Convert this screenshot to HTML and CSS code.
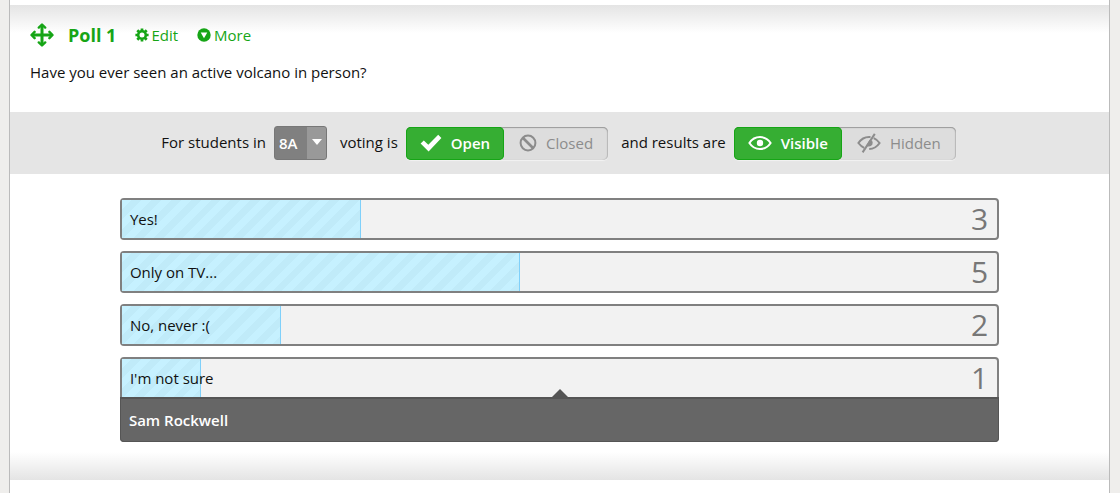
FILE: index.html
```html
<!DOCTYPE html>
<html lang="en">
<head>
<meta charset="utf-8">
<meta name="viewport" content="width=device-width, initial-scale=1">
<title>Poll 1</title>
<link rel="stylesheet" href="styles.css">
</head>
<body>
<main class="sheet">
  <section class="poll">
    <header class="poll-head">
      <div class="title-row">
        <button class="move" type="button" aria-label="Move poll">
          <svg width="24" height="24" viewBox="0 0 24 24" fill="none" stroke="currentColor" stroke-linecap="round" stroke-linejoin="round"><path stroke-width="3" stroke-linecap="butt" d="M12 3v18M3 12h18"/><path stroke-width="2.4" d="M8.8 4.6 12 1.5l3.2 3.1M8.8 19.4l3.2 3.1 3.2-3.1M4.6 8.8 1.5 12l3.1 3.2M19.4 8.8l3.1 3.2-3.1 3.2"/></svg>
        </button>
        <h1 class="title">Poll 1</h1>
        <button class="action action-edit" type="button">
          <svg width="14" height="14" viewBox="0 0 14 14" fill="none" stroke="currentColor"><circle cx="7" cy="7" r="3.8" stroke-width="2.6"/><path stroke-width="2.7" d="M7 .4v2.4M7 11.2v2.4M.4 7h2.4M11.2 7h2.4M2.3 2.3 4 4M10 10l1.7 1.7M11.7 2.3 10 4M4 10l-1.7 1.7"/></svg>
          Edit
        </button>
        <button class="action action-more" type="button">
          <svg width="14" height="14" viewBox="0 0 14 14"><circle cx="7" cy="7" r="6.7" fill="currentColor"/><path fill="#fff" d="M3.7 4.5h6.6L7 10.2z"/></svg>
          More
        </button>
      </div>
      <p class="question">Have you ever seen an active volcano in person?</p>
    </header>

    <form class="controls">
      <label class="phrase" for="group">For students in</label>
      <span class="picker">
        <select class="picker-select" id="group"><option>8A</option></select>
        <span class="picker-arrow"></span>
      </span>
      <span class="phrase phrase-next">voting is</span>
      <span class="toggle" role="radiogroup" aria-label="Voting">
        <label class="choice"><input class="choice-input" type="radio" name="voting" checked>
          <svg width="22" height="18" viewBox="0 0 22 18"><path fill="currentColor" d="m.6 9.600 3.200-3.200 4.500 4.300L18.200.8l3.200 3.100L8.600 17.500z"/></svg>
          Open</label>
        <label class="choice"><input class="choice-input" type="radio" name="voting">
          <svg width="18" height="18" viewBox="0 0 18 18" fill="none" stroke="currentColor" stroke-width="2"><circle cx="9" cy="9" r="7.4"/><path stroke-width="2.6" d="m4 4 10 10"/></svg>
          Closed</label>
      </span>
      <span class="phrase phrase-next">and results are</span>
      <span class="toggle" role="radiogroup" aria-label="Results">
        <label class="choice"><input class="choice-input" type="radio" name="results" checked>
          <svg width="24" height="18" viewBox="0 0 24 18"><path fill="none" stroke="currentColor" stroke-width="2" d="M1.400 9C4 5 7.600 3 12 3S20 5 22.600 9C20 13 16.400 15 12 15S4 13 1.400 9z"/><circle cx="12" cy="9" r="3.200" fill="currentColor"/></svg>
          Visible</label>
        <label class="choice"><input class="choice-input" type="radio" name="results">
          <svg width="24" height="20" viewBox="0 0 24 20" fill="none" stroke="currentColor" stroke-width="2"><path d="M7.200 14.800C4.800 13.700 3 12.100 1.400 10 4 6.200 7.600 4 12 4l1.500.1M16.700 5.200C19.200 6.300 21 7.900 22.600 10c-2.700 3.900-6.100 6-10.400 6.100"/><path fill="currentColor" stroke="none" d="M12.500 7.100 9 13.300l2.700.2c2.300 0 3.900-1.500 4-3.700l-.5-2z"/><path d="M17.800.9 5.600 19.400"/></svg>
          Hidden</label>
      </span>
    </form>

    <ul class="results">
      <li class="option"><div class="bar"><span class="fill" style="width:27.27%"></span><span class="name">Yes!</span><span class="count">3</span></div></li>
      <li class="option"><div class="bar"><span class="fill" style="width:45.45%"></span><span class="name">Only on TV...</span><span class="count">5</span></div></li>
      <li class="option"><div class="bar"><span class="fill" style="width:18.18%"></span><span class="name">No, never :(</span><span class="count">2</span></div></li>
      <li class="option option-open"><div class="bar"><span class="fill" style="width:9.09%"></span><span class="name">I'm not sure</span><span class="count">1</span></div><div class="voters">Sam Rockwell</div></li>
    </ul>
  </section>
</main>
</body>
</html>
```
FILE: styles.css
```css
* {
  box-sizing: border-box;
}

body {
  margin: 0;
  background: #efeeec;
  color: #111;
  font: 15px/24px "Open Sans", "Noto Sans", sans-serif;
}

button,
select {
  margin: 0;
  padding: 0;
  border: 0;
  background: none;
  color: inherit;
  font: inherit;
}

svg {
  flex: none;
}

.sheet {
  min-height: 100vh;
  margin: 0 10px 0 9px;
  padding: 5px 0 12px;
  border: solid #bbb;
  border-width: 0 1px;
  background: #fff;
}

.poll {
  padding-bottom: 38px;
  background:
    linear-gradient(#e4e4e4, #fff) top / 100% 28px no-repeat,
    linear-gradient(#fff, #e4e4e4) bottom / 100% 28px no-repeat;
}

.poll-head {
  padding: 18px 20px 28px;
}

.title-row {
  display: flex;
  align-items: center;
  margin-bottom: 13px;
  color: #16a516;
}

.move {
  display: flex;
}

.title {
  margin: 0 19px 0 14px;
  font-size: 18px;
  line-height: 24px;
}

.action {
  display: flex;
  align-items: center;
  gap: 2px;
}

.action-more {
  gap: 3px;
  margin-left: 19px;
}

.question {
  margin: 0;
}

.controls {
  display: flex;
  justify-content: center;
  align-items: center;
  gap: 8px;
  padding: 14px 20px 14px 18px;
  background: #e5e5e5;
}

.phrase {
  padding-bottom: 2px;
}

.phrase-next {
  margin-left: 5px;
}

.picker {
  position: relative;
  display: flex;
}

.picker-select {
  width: 53px;
  height: 34px;
  padding-left: 4px;
  border: 1px solid #777;
  border-radius: 3px;
  appearance: none;
  background: linear-gradient(90deg, #808080 32px, #999 32px);
  color: #fff;
  font-weight: 600;
}

.picker-arrow {
  position: absolute;
  top: 13px;
  right: 5px;
  border: 5px solid transparent;
  border-top: 6px solid #fff;
  border-bottom: 0;
  pointer-events: none;
}

.toggle {
  display: flex;
  border-radius: 5px;
  background: #ddd;
  box-shadow: inset 0 1px 1px #999, inset -1px 0 1px #bbb, 0 1px 1px #f2f2f2;
}

.choice {
  position: relative;
  display: flex;
  align-items: center;
  gap: 9px;
  height: 33px;
  padding: 0 15px 1px;
  border-radius: 5px;
  color: #8c8c8c;
}

.choice:has(:checked) {
  padding: 0 14px 1px;
  background: #36ae33;
  box-shadow: inset 0 0 0 1px #16a516;
  color: #fff;
  font-weight: 600;
}

.choice-input {
  position: absolute;
  inset: 0;
  margin: 0;
  opacity: 0;
}

.results {
  display: grid;
  gap: 11px;
  width: 80%;
  margin: 24px auto 0;
  padding: 0;
  list-style: none;
}

.option {
  border: 2px solid #808080;
  border-radius: 4px;
  background: #f2f2f2;
}

.bar {
  display: grid;
  grid-template-columns: 1fr auto;
  align-items: center;
  height: 38px;
  padding-right: 9px;
  position: relative;
}

.fill {
  position: absolute;
  inset: 0 auto 0 0;
  border-right: 1px solid #7fd0fa;
  background: repeating-linear-gradient(135deg, #c6f1ff 0 7px, #c0ebf9 7px 14px);
}

.name {
  position: relative;
  padding-left: 8px;
}

.count {
  color: #777;
  font-size: 30px;
  line-height: 38px;
}

.voters {
  position: relative;
  margin: 0 -2px -2px;
  padding: 9px 8px;
  border: solid #555;
  border-width: 2px 1px 1px;
  border-radius: 0 0 4px 4px;
  background: #666;
  color: #fff;
  font-weight: 600;
}

.voters::before {
  content: "";
  position: absolute;
  bottom: 100%;
  left: 50%;
  margin-left: -10px;
  border: 10px solid transparent;
  border-bottom-color: #555;
  border-top: 0;
}
```
